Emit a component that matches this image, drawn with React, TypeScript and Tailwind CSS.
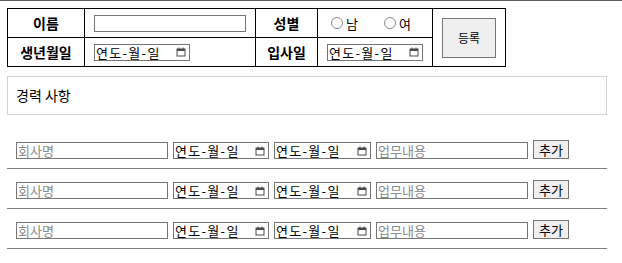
import clsx from "clsx";

const font = "font-['Noto_Sans_CJK_KR','Noto_Sans',sans-serif]";

function CalendarIcon() {
    return (
        <svg width="10" height="10" viewBox="0 0 10 10" className="shrink-0">
            <rect x="1" y="2" width="8" height="7" fill="none" stroke="#4a4a4a" strokeWidth="1" />
            <rect x="1" y="2" width="8" height="2" fill="#4a4a4a" />
            <rect x="2.5" y="0.5" width="1" height="2" fill="#4a4a4a" />
            <rect x="6.5" y="0.5" width="1" height="2" fill="#4a4a4a" />
        </svg>
    );
}

function DateBox({ className }: { className: string }) {
    return (
        <div
            className={clsx(
                "flex items-center justify-between h-[17px] border border-[#767676] pl-px pr-[3px] text-[13px] leading-none text-black bg-white",
                className
            )}
        >
            <span className="tracking-[1.3px]">연도-월-일</span>
            <CalendarIcon />
        </div>
    );
}

function Radio({ label }: { label: string }) {
    return (
        <label className="flex items-center gap-[3px] text-[13px] leading-none text-black">
            <span className="w-[12px] h-[12px] rounded-full border border-[#8a8a8a] bg-white" />
            {label}
        </label>
    );
}

function CareerRow() {
    return (
        <div>
            <div className="flex items-end gap-[5px] pl-[9px]">
                <input
                    placeholder="회사명"
                    className="w-[152px] h-[17px] border border-[#767676] px-px text-[13px] leading-none placeholder:text-[#8a8a8a] outline-none"
                />
                <DateBox className="w-[96px]" />
                <DateBox className="w-[97px]" />
                <input
                    placeholder="업무내용"
                    className="w-[152px] h-[17px] border border-[#767676] px-px text-[13px] leading-none placeholder:text-[#8a8a8a] outline-none"
                />
                <button className="w-[36px] h-[19px] border border-[#767676] bg-[#efefef] text-[13px] leading-none text-black">
                    추가
                </button>
            </div>
            <div className="mt-[9px] mb-[11px] h-px bg-[#808080]" />
        </div>
    );
}

export default function App() {
    return (
        <div className={clsx("w-[622px] h-[263px] bg-white overflow-hidden", font)}>
            <div className="h-px bg-[#5a5a5a]" />

            <div className="ml-[7px] mt-[7px] w-fit grid grid-cols-[77px_171px_62px_115px_73px] grid-rows-[29px_29px] border-l border-t border-black">
                <div className="flex items-center justify-center border-r border-b border-black text-[14px] font-bold">이름</div>
                <div className="flex items-center pl-[9px] border-r border-b border-black">
                    <input className="w-[152px] h-[17px] border border-[#767676] px-px text-[13px] outline-none" />
                </div>
                <div className="flex items-center justify-center border-r border-b border-black text-[14px] font-bold">성별</div>
                <div className="flex items-center gap-[26px] pl-[13px] border-r border-b border-black">
                    <Radio label="남" />
                    <Radio label="여" />
                </div>
                <div className="row-span-2 flex items-center pl-[9px] border-r border-b border-black">
                    <button className="w-[54px] h-[40px] border border-[#767676] bg-[#efefef] text-[12px] leading-none text-black">
                        등록
                    </button>
                </div>
                <div className="flex items-center justify-center border-r border-b border-black text-[14px] font-bold">생년월일</div>
                <div className="flex items-center pl-[9px] border-r border-b border-black">
                    <DateBox className="w-[96px]" />
                </div>
                <div className="flex items-center justify-center border-r border-b border-black text-[14px] font-bold">입사일</div>
                <div className="flex items-center pl-[9px] border-r border-b border-black">
                    <DateBox className="w-[96px]" />
                </div>
            </div>

            <div className="ml-[7px] mt-[9px] w-[600px] h-[39px] flex items-center pl-[8px] border border-[#d3d3d3] text-[14px] text-black">
                경력 사항
            </div>

            <div className="ml-[7px] mt-[25px] w-[600px]">
                <CareerRow />
                <CareerRow />
                <CareerRow />
            </div>
        </div>
    );
}
